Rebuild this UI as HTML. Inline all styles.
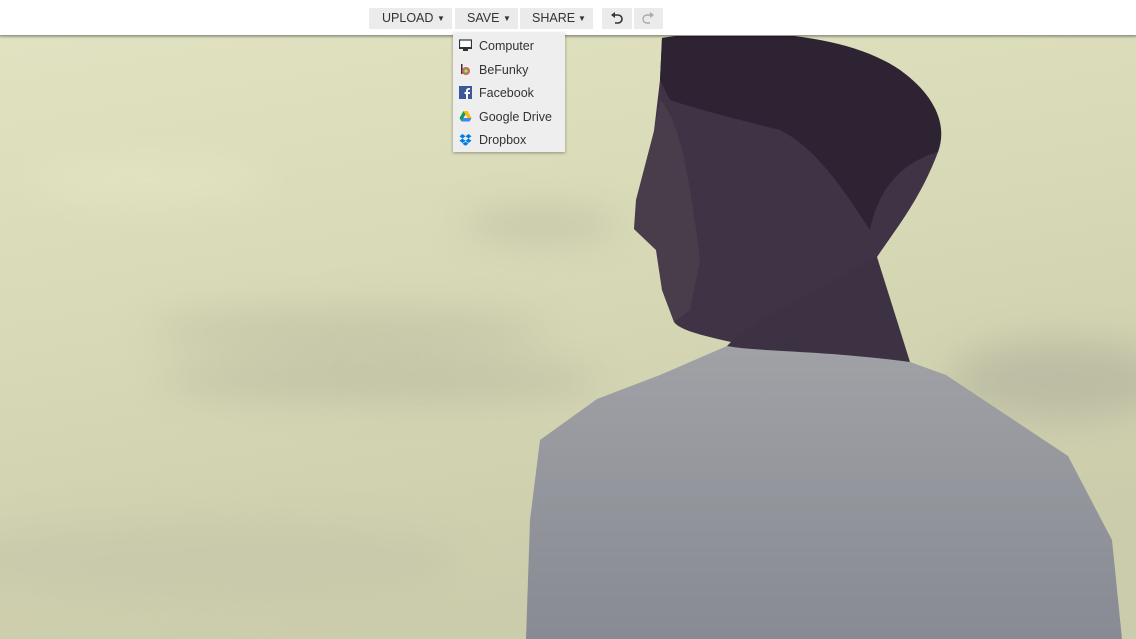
<!DOCTYPE html>
<html><head><meta charset="utf-8">
<style>
*{margin:0;padding:0;box-sizing:border-box}
body{width:1136px;height:639px;overflow:hidden;position:relative;font-family:"Liberation Sans",sans-serif;background:#d6d6b2}
#bg{position:absolute;left:0;top:0}
.bar{position:absolute;left:0;top:0;width:1136px;height:36px;background:#fff;border-bottom:1px solid #9a9a8a;box-shadow:0 1px 2px rgba(0,0,0,.3)}
.btn{position:absolute;top:8px;height:21px;background:#ebebeb;font-size:12.5px;color:#333;line-height:21px}
.btn .a{position:absolute;font-size:8px;top:0}
.menu{position:absolute;left:453px;top:33px;width:112px;height:119px;background:#eeeeee;box-shadow:0 1px 3px rgba(0,0,0,.35)}
.it{position:absolute;left:26px;font-size:12.5px;color:#333}
.ic{position:absolute;left:6px;width:13px;height:13px}
</style></head><body>
<svg id="bg" width="1136" height="639" viewBox="0 0 1136 639">
<defs>
<linearGradient id="sky" x1="0" y1="0" x2="0.3" y2="1">
<stop offset="0" stop-color="#e2e3c2"/><stop offset="0.5" stop-color="#d8d9b6"/><stop offset="1" stop-color="#cbccab"/></linearGradient>
<filter id="bl"><feGaussianBlur stdDeviation="18"/></filter>
<linearGradient id="sh" x1="0" y1="0" x2="0" y2="1"><stop offset="0" stop-color="#a0a2a6"/><stop offset="1" stop-color="#888a94"/></linearGradient>
</defs>
<rect width="1136" height="639" fill="url(#sky)"/>
<g filter="url(#bl)" opacity="0.4">
<ellipse cx="540" cy="225" rx="80" ry="16" fill="#a8a995"/>
<ellipse cx="350" cy="330" rx="200" ry="22" fill="#b0b19a"/>
<ellipse cx="380" cy="380" rx="220" ry="22" fill="#a9aa96"/>
<ellipse cx="1060" cy="380" rx="110" ry="40" fill="#9e9f92"/>
<ellipse cx="150" cy="180" rx="120" ry="20" fill="#ececcc"/>
<ellipse cx="200" cy="560" rx="260" ry="40" fill="#c0c1a7"/>
</g>
<path d="M597,399 L540,440 L530,520 L526,639 L1122,639 L1112,540 L1068,456 L946,375 L910,362 L820,340 L727,346 L660,375 Z" fill="url(#sh)"/>
<path d="M731,342 L727,346 C760,352 820,350 910,362 L877,257 L860,200 L740,240 Z" fill="#3d3243"/>
<path d="M662,38 C720,30 840,30 900,70 C930,95 945,120 938,152 C920,200 895,230 877,257 C850,270 800,300 760,320 L731,342 C700,335 680,330 674,322 L662,290 L656,250 L634,229 L636,200 L654,131 L660,80 Z" fill="#3f3345"/>
<path d="M662,38 C720,28 840,28 900,70 C935,95 948,125 938,152 C910,160 880,180 870,230 C850,200 820,150 780,130 C740,120 700,110 670,100 L660,80 Z" fill="#2d2333"/>
<path d="M654,131 L660,100 C680,120 690,180 700,260 L690,310 L674,322 L662,290 L656,250 L634,229 L636,200 Z" fill="#5a4b55" opacity="0.4"/>
</svg>
<div class="bar"></div>
<div class="btn" style="left:369px;width:83px"><span style="position:absolute;left:13px">UPLOAD</span><span class="a" style="left:68px">▼</span></div>
<div class="btn" style="left:455px;width:63px"><span style="position:absolute;left:12px">SAVE</span><span class="a" style="left:48px">▼</span></div>
<div class="btn" style="left:520px;width:73px"><span style="position:absolute;left:12px">SHARE</span><span class="a" style="left:58px">▼</span></div>
<div class="btn" style="left:602px;width:30px"><svg style="position:absolute;left:8px;top:4px" width="14" height="13" viewBox="0 0 14 13"><path d="M4,3 H8 A4,4 0 0 1 8,11 H5" fill="none" stroke="#333" stroke-width="1.6"/><path d="M1,3 L5,0 L5,6 Z" fill="#333"/></svg></div>
<div class="btn" style="left:634px;width:29px"><svg style="position:absolute;left:7px;top:4px" width="14" height="13" viewBox="0 0 14 13"><path d="M10,3 H6 A4,4 0 0 0 6,11 H9" fill="none" stroke="#aaa" stroke-width="1.4"/><path d="M13,3 L9,0 L9,6 Z" fill="#aaa"/></svg></div>
<div class="menu">
<svg class="ic" style="top:6px" viewBox="0 0 13 13"><rect x="0.5" y="1" width="12" height="8" fill="#fff" stroke="#333" stroke-width="1.2"/><rect x="0" y="8" width="13" height="2" fill="#333"/><rect x="4" y="10" width="5" height="2" fill="#333"/></svg>
<div class="it" style="top:6px">Computer</div>
<svg class="ic" style="top:30px" viewBox="0 0 13 13"><rect x="2" y="1" width="1.5" height="10" fill="#333"/><circle cx="7" cy="8" r="4" fill="#e55"/><circle cx="7" cy="8" r="2.6" fill="#4b8"/><circle cx="7" cy="8" r="1.4" fill="#fc3"/></svg>
<div class="it" style="top:30px">BeFunky</div>
<svg class="ic" style="top:53px" viewBox="0 0 13 13"><rect width="13" height="13" fill="#3b5998"/><path d="M9,13 V8 H11 V6 H9 V4.5 C9,4 9.5,3.8 11,3.8 V2 C8,1.8 7,3 7,5 V6 H5.5 V8 H7 V13 Z" fill="#fff"/></svg>
<div class="it" style="top:53px">Facebook</div>
<svg class="ic" style="top:77px" viewBox="0 0 13 13"><path d="M4.5,1 L8.5,1 L12.5,8 L10.5,11.5 Z" fill="#fbbc05"/><path d="M4.5,1 L0.5,8 L2.5,11.5 L6.5,4.5 Z" fill="#0f9d58"/><path d="M2.5,11.5 L10.5,11.5 L12.5,8 L4.5,8 Z" fill="#4285f4"/></svg>
<div class="it" style="top:77px">Google Drive</div>
<svg class="ic" style="top:100px" viewBox="0 0 13 13"><path d="M3.5,1 L0.5,3.2 L3.5,5.5 L6.5,3.2Z M9.5,1 L6.5,3.2 L9.5,5.5 L12.5,3.2Z M3.5,5.5 L0.5,7.8 L3.5,10 L6.5,7.8Z M9.5,5.5 L6.5,7.8 L9.5,10 L12.5,7.8Z M3.5,10.8 L6.5,12.8 L9.5,10.8 L6.5,8.6Z" fill="#007ee5"/></svg>
<div class="it" style="top:100px">Dropbox</div>
</div>
</body></html>
